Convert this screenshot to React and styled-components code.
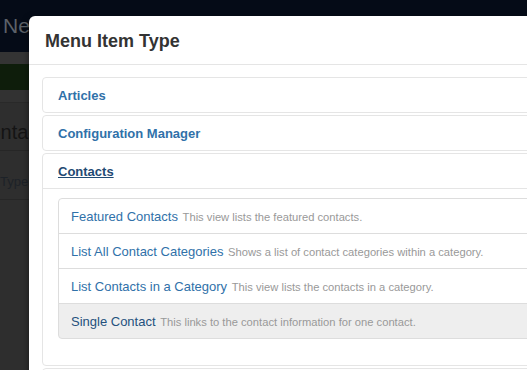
import React from "react";
import styled, { createGlobalStyle } from "styled-components";

const GlobalStyle = createGlobalStyle`
  html, body { margin: 0; padding: 0; }
  body {
    overflow: hidden;
    background: #2e2e2e;
    font-family: "Liberation Sans", Arial, Helvetica, sans-serif;
    width: 527px;
    height: 370px;
  }
  * { box-sizing: border-box; }
`;

const Page = styled.div`
  position: relative;
  width: 527px;
  height: 370px;
  overflow: hidden;
  background: #2e2e2e;
`;

const Navbar = styled.div`
  height: 52px;
  background: #050b17;
  color: #5c6168;
  font-size: 21px;
  line-height: 52px;
  padding-left: 3px;
`;

const Band = styled.div`
  height: ${(p) => p.$h}px;
  background: ${(p) => p.$bg};
  border-bottom: ${(p) => (p.$line ? "1px solid #292929" : "none")};
`;

const TitleRow = styled.div`
  height: 48px;
  border-bottom: 1px solid #262626;
  padding-top: 17px;
  font-size: 20px;
  line-height: 24px;
  color: #141414;
  white-space: nowrap;
  margin-left: -25px;
`;

const FieldRow = styled.div`
  height: 49px;
  border-bottom: 1px solid #262626;
  padding-top: 22px;
  font-size: 13px;
  line-height: 18px;
  color: #1d2228;
`;

const Modal = styled.div`
  position: absolute;
  top: 16px;
  left: 29px;
  width: 580px;
  height: 400px;
  background: #fff;
  border-radius: 6px;
  box-shadow: 0 3px 7px rgba(0, 0, 0, 0.5);
  overflow: hidden;
`;

const ModalHeader = styled.div`
  height: 49px;
  padding: 15px 16px 0;
  border-bottom: 1px solid #e5e5e5;
`;

const ModalTitle = styled.h3`
  margin: 0;
  font-size: 18px;
  line-height: 20px;
  font-weight: bold;
  color: #333;
`;

const ModalBody = styled.div`
  padding: 12px 13px;
`;

const Group = styled.div`
  border: 1px solid #e5e5e5;
  border-radius: 4px;
  margin-bottom: 2px;
`;

const Toggle = styled.a`
  display: block;
  padding: 9px 15px 7px;
  font-size: 13px;
  line-height: 18px;
  font-weight: bold;
  color: ${(p) => (p.$active ? "#1f4a73" : "#3071a9")};
  text-decoration: ${(p) => (p.$active ? "underline" : "none")};
  cursor: pointer;
`;

const Inner = styled.div`
  border-top: 1px solid #e5e5e5;
  padding: 9px 15px;
`;

const List = styled.ul`
  list-style: none;
  margin: 0 0 17px;
  padding: 0;
`;

const Item = styled.li`
  border: 1px solid #ddd;
  margin-bottom: -1px;
  padding: 9px 12px 7px;
  font-size: 13px;
  line-height: 18px;
  white-space: nowrap;
  background: ${(p) => (p.$hover ? "#eee" : "#fff")};
  color: ${(p) => (p.$hover ? "#24517d" : "#3071a9")};

  &:first-child {
    border-top-left-radius: 4px;
    border-top-right-radius: 4px;
  }
  &:last-child {
    margin-bottom: 0;
    border-bottom-left-radius: 4px;
    border-bottom-right-radius: 4px;
  }
`;

const Desc = styled.small`
  font-size: 11.2px;
  color: #999;
  margin-left: 1px;
`;

const groups = [
  { title: "Articles" },
  { title: "Configuration Manager" },
  {
    title: "Contacts",
    active: true,
    items: [
      ["Featured Contacts", "This view lists the featured contacts."],
      ["List All Contact Categories", "Shows a list of contact categories within a category."],
      ["List Contacts in a Category", "This view lists the contacts in a category."],
      ["Single Contact", "This links to the contact information for one contact.", true],
    ],
  },
  { title: "Menus" },
];

export default function App() {
  return (
    <>
      <GlobalStyle />
      <Page>
        <Navbar>New</Navbar>
        <Band $h={12} $bg="#343434" />
        <Band $h={26} $bg="#0e1d0b" />
        <Band $h={13} $bg="#323232" $line />
        <TitleRow>Contacts: New</TitleRow>
        <FieldRow>Type</FieldRow>
        <Modal>
          <ModalHeader>
            <ModalTitle>Menu Item Type</ModalTitle>
          </ModalHeader>
          <ModalBody>
            {groups.map((g) => (
              <Group key={g.title}>
                <Toggle $active={g.active}>{g.title}</Toggle>
                {g.items && (
                  <Inner>
                    <List>
                      {g.items.map(([name, desc, hover]) => (
                        <Item key={name} $hover={hover}>
                          {name} <Desc>{desc}</Desc>
                        </Item>
                      ))}
                    </List>
                  </Inner>
                )}
              </Group>
            ))}
          </ModalBody>
        </Modal>
      </Page>
    </>
  );
}
